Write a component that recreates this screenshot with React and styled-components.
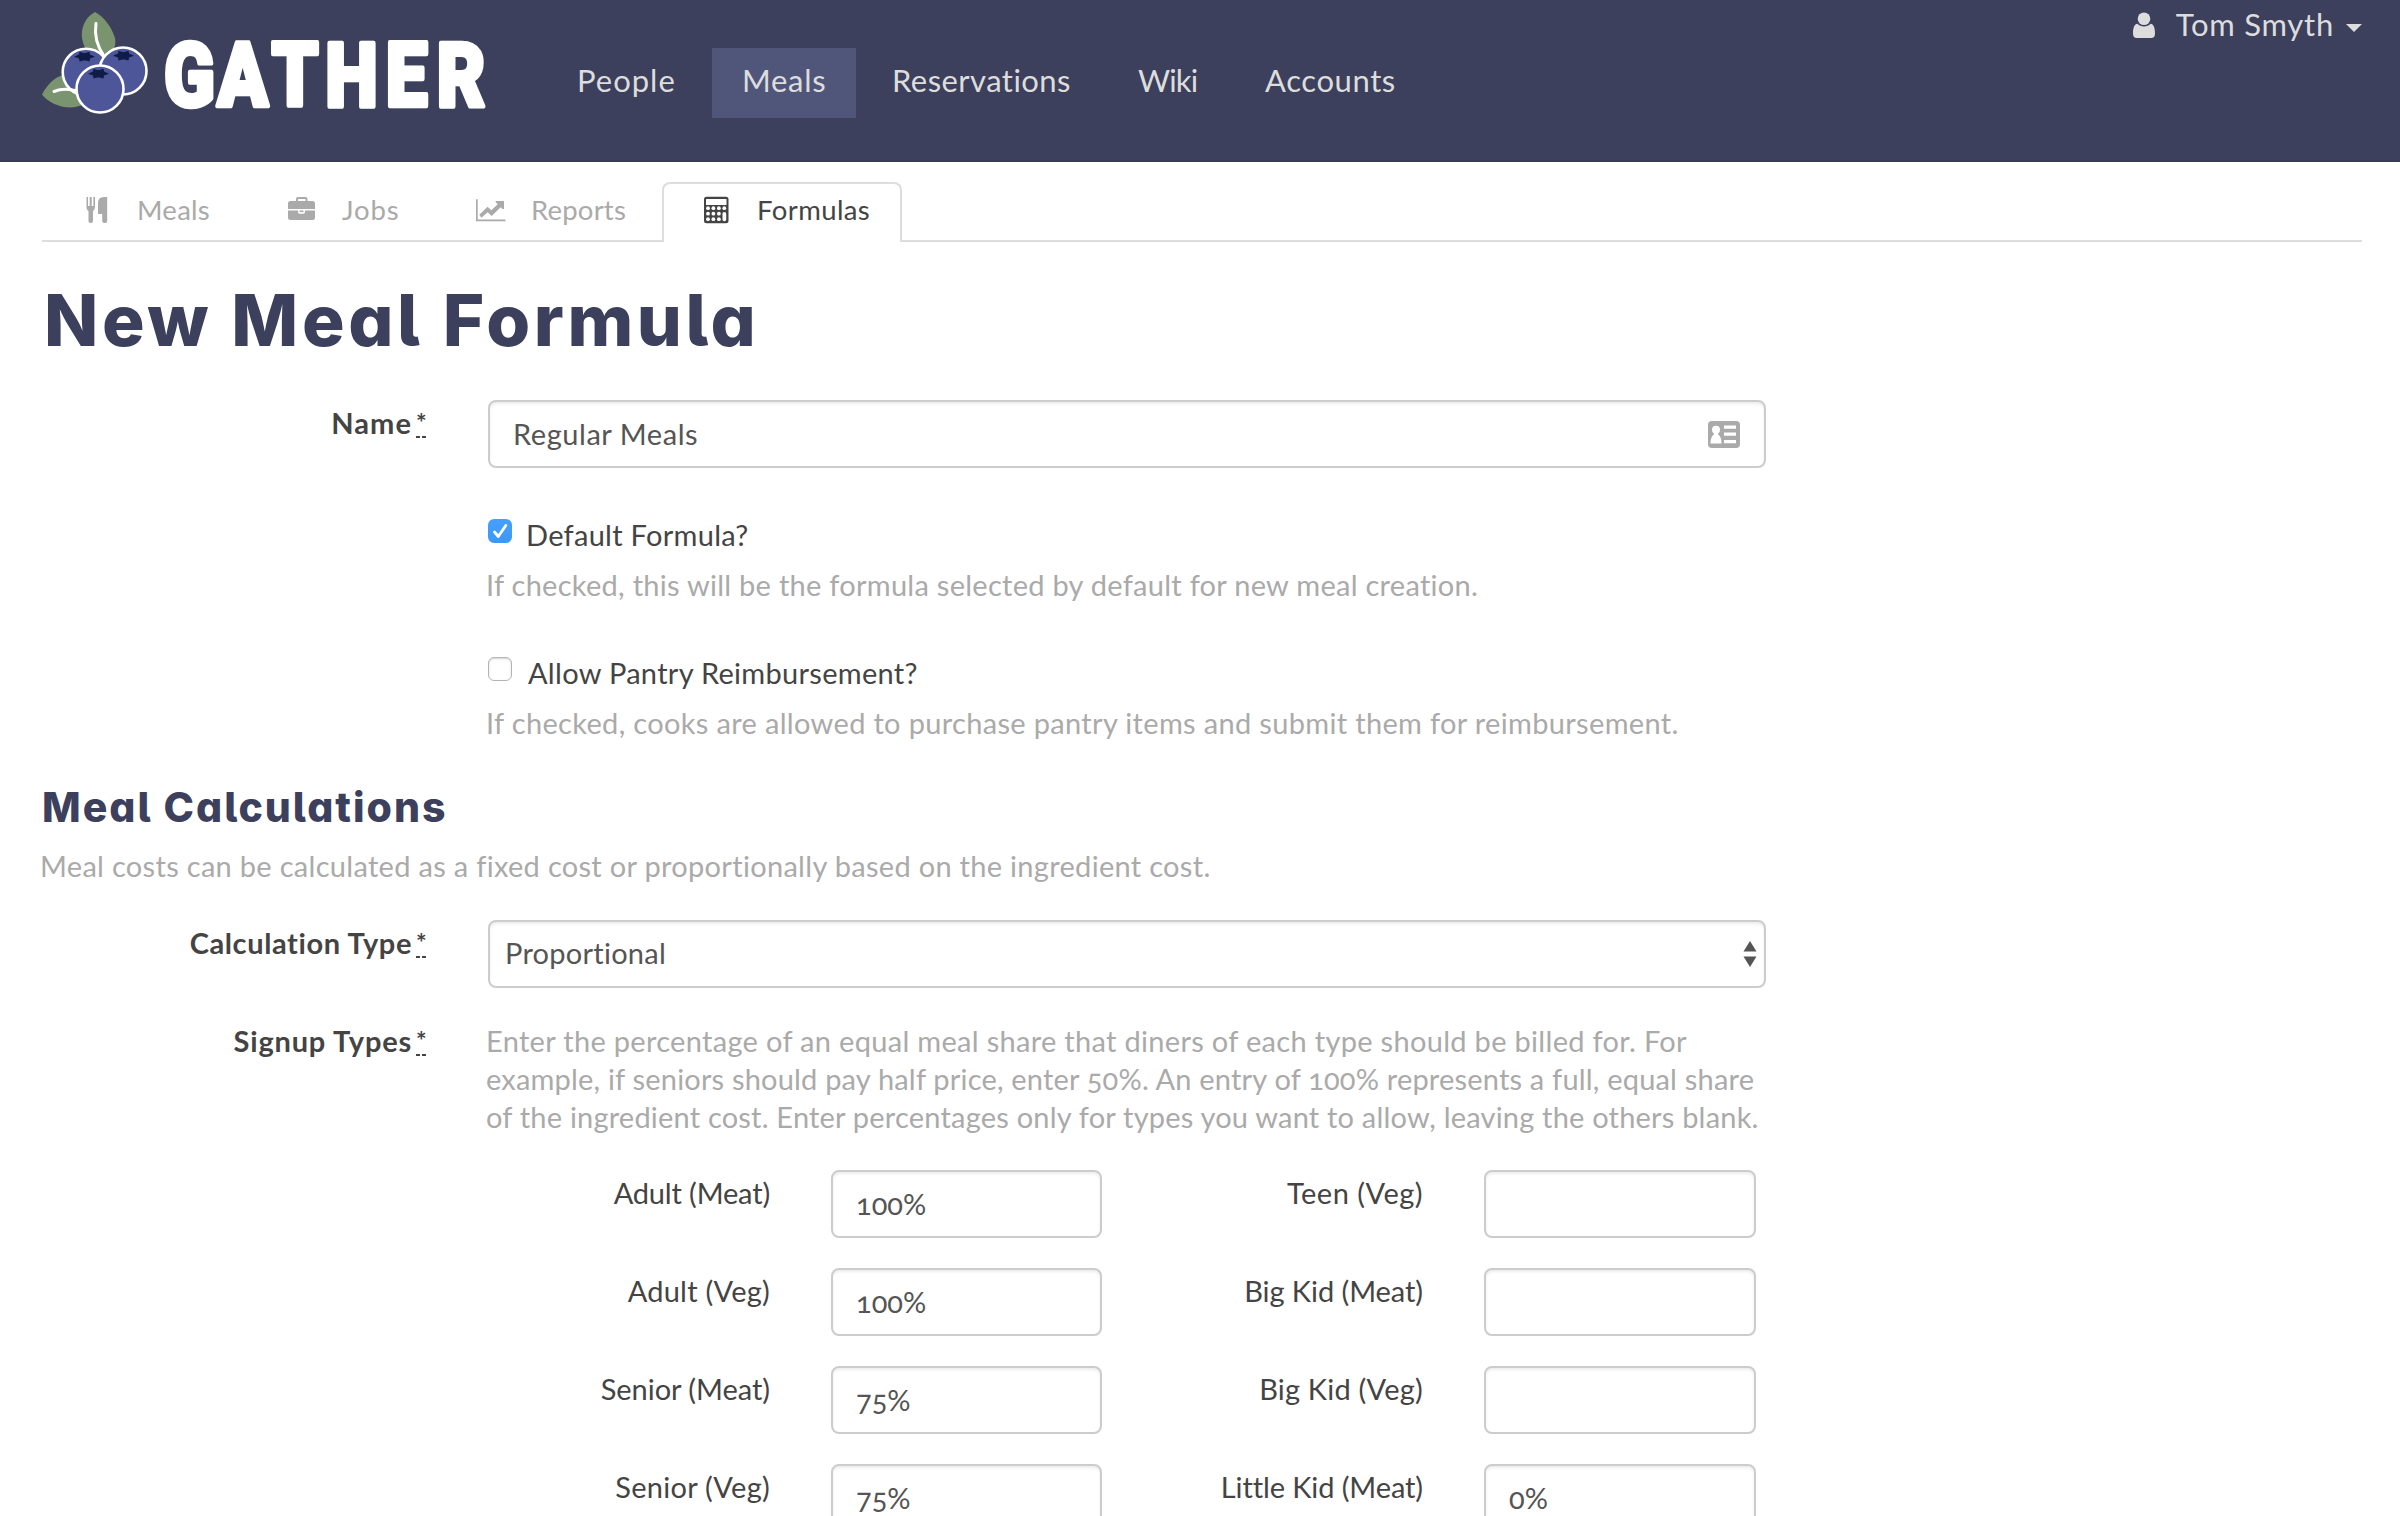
import React from "react";
import styled, { createGlobalStyle } from "styled-components";

const navy = "#3c405c";
const heading = '"Inter", "Open Sans", sans-serif';

const GlobalStyle = createGlobalStyle`
  * { box-sizing: border-box; }
  body {
    margin: 0;
    background: #fff;
    color: #444;
    font-family: "Lato", "Open Sans", sans-serif;
    font-size: 29px;
    line-height: 38px;
    font-feature-settings: "onum";
  }
`;

const Page = styled.div`
  width: 2400px;
  height: 1516px;
  overflow: hidden;
`;

/* ---------- header ---------- */

const Header = styled.header`
  display: flex;
  align-items: flex-start;
  height: 162px;
  padding: 0 38px 0 42px;
  background: ${navy};
  border-bottom: 2px solid #383b57;
`;

const LogoArt = styled.svg`
  flex: none;
  display: block;
  width: 456px;
  height: 150px;
  overflow: visible;
`;

const Wordmark = styled.text`
  font-family: "Roboto", sans-serif;
  font-weight: 900;
  font-size: 89px;
  fill: #fff;
  stroke: #fff;
  stroke-width: 4.4px;
  stroke-linejoin: round;
  text-anchor: middle;
`;

const Nav = styled.nav`
  display: flex;
  gap: 6px;
  margin: 48px 0 0 49px;
`;

const NavItem = styled.a`
  width: ${(p) => p.$width}px;
  height: 70px;
  padding-left: 30px;
  font-size: 31px;
  line-height: 65px;
  letter-spacing: ${(p) => p.$track}px;
  white-space: nowrap;
  color: #ddd;
  background: ${(p) => (p.$active ? "#50567a" : "transparent")};
`;

const UserMenu = styled.div`
  display: flex;
  margin-left: auto;
  font-size: 31px;
  line-height: 48px;
  letter-spacing: 0.75px;
  color: #ddd;
  fill: #ddd;
`;

const UserIcon = styled.svg`
  width: 22px;
  height: 26px;
  margin: 12px 21px 0 0;
`;

const Caret = styled.svg`
  width: 16px;
  height: 8px;
  margin: 24px 0 0 12px;
`;

/* ---------- tabs ---------- */

const Tabs = styled.div`
  display: flex;
  height: 60px;
  margin: 20px 38px 0 42px;
  padding-left: 44px;
  border-bottom: 2px solid #ddd;
`;

const Tab = styled.a`
  flex: none;
  display: flex;
  width: ${(p) => p.$width}px;
  height: 60px;
  padding-left: ${(p) => (p.$active ? 40 : 0)}px;
  border: solid ${(p) => (p.$active ? "#ddd" : "transparent")};
  border-width: ${(p) => (p.$active ? "2px 2px 0" : "2px 0 0")};
  border-radius: 8px 8px 0 0;
  background: ${(p) => (p.$active ? "#fff" : "transparent")};
  color: ${(p) => (p.$active ? "#444" : "#aaa")};
  fill: ${(p) => (p.$active ? "#444" : "#aaa")};
  font-size: 27.5px;
  line-height: 51px;
  letter-spacing: ${(p) => p.$track}px;
`;

const TabIcon = styled.svg`
  flex: none;
  width: ${(p) => p.$slot}px;
  height: 32px;
  margin-top: 11px;
`;

/* ---------- form ---------- */

const Content = styled.main`
  margin-left: 42px;
  width: 1724px;
`;

const PageTitle = styled.h1`
  margin: 39px 0 0;
  padding-left: 2px;
  font: 800 71px/78px ${heading};
  font-feature-settings: "cv11", "cv05";
  letter-spacing: 3.6px;
  white-space: nowrap;
  color: ${navy};
`;

const SectionTitle = styled.h3`
  margin: 42px 0 0;
  font: 800 41px/46px ${heading};
  font-feature-settings: "cv11", "cv05";
  letter-spacing: 1.98px;
  white-space: nowrap;
  color: ${navy};
`;

const Muted = styled.p`
  margin: ${(p) => p.$top || 0}px 0 0 -2px;
  letter-spacing: ${(p) => p.$track}px;
  white-space: nowrap;
  color: #aaa;
`;

const Line = styled.span`
  display: block;
  letter-spacing: ${(p) => p.$track}px;
`;

const FormRow = styled.div`
  display: grid;
  grid-template-columns: 386px 1278px;
  column-gap: 60px;
  margin-top: ${(p) => p.$top}px;
`;

const Label = styled.label`
  display: flex;
  justify-content: flex-end;
  padding: ${(p) => (p.$boxed ? 4 : 0)}px 2px 0 0;
  font-weight: 700;
  letter-spacing: ${(p) => p.$track}px;
`;

const Required = styled.abbr`
  width: 10px;
  height: 38px;
  margin-left: 4px;
  font-size: 25px;
  line-height: 36px;
  letter-spacing: 0;
  text-align: right;
  background: linear-gradient(90deg, #444 4px, transparent 4px) 0 32px / 6px 2px repeat-x;
`;

const Field = styled.div`
  display: flex;
  align-items: center;
  height: 68px;
  border: 2px solid #ccc;
  border-radius: 8px;
  box-shadow: inset 0 2px 3px rgba(0, 0, 0, 0.075);
  padding-right: ${(p) => (p.$picker ? 6 : 24)}px;
  padding-left: ${(p) => (p.$picker ? 15 : 23)}px;
`;

const FieldInput = styled.input`
  flex: 1;
  min-width: 0;
  height: 64px;
  padding: 0 0 2px;
  border: 0;
  outline: 0;
  background: transparent;
  color: #555;
  font: inherit;
  font-feature-settings: inherit;
  letter-spacing: ${(p) => p.$track || 0}px;
`;

const Selected = styled.span`
  flex: 1;
  padding-bottom: 2px;
  letter-spacing: 0.25px;
  color: #555;
`;

const CardIcon = styled.svg`
  width: 32px;
  height: 27px;
`;

const Stepper = styled.svg`
  width: 16px;
  height: 28px;
  fill: #555;
`;

const CheckGroup = styled.div`
  margin: ${(p) => p.$top}px 0 0 446px;
`;

const CheckLabel = styled.label`
  display: flex;
  align-items: flex-start;
  margin-bottom: 12px;
  letter-spacing: ${(p) => p.$track}px;
  white-space: nowrap;
`;

const Box = styled.span`
  flex: none;
  display: flex;
  width: 24px;
  height: 24px;
  margin: 3px ${(p) => (p.$checked ? 14 : 16)}px 0 0;
  border: ${(p) => (p.$checked ? "0" : "1px solid #b4b4b4")};
  border-radius: 6px;
  background: ${(p) => (p.$checked ? "linear-gradient(#45a0fc, #3b99fc)" : "#fff")};
  box-shadow: ${(p) => (p.$checked ? "none" : "inset 0 1px 2px rgba(0,0,0,0.18)")};
`;

const SignupGrid = styled.div`
  display: grid;
  grid-template-columns: 282px 271px 260px 272px;
  gap: 30px 61px;
  margin-top: 34px;
`;

const SignupLabel = styled.label`
  padding-top: 4px;
  text-align: right;
  white-space: nowrap;
  letter-spacing: ${(p) => p.$track}px;
`;

/* ---------- drawings ---------- */

const Star = ({ x, y }) => (
  <path
    transform={`translate(${x} ${y})`}
    d="M-10.5 0L-5.5-2.2L-5-5L-1.2-3.8L1.2-3.8L5-5L5.5-2.2L10.5 0L5.5 1.8L5 4.8L1.2 3.8L-1.2 3.8L-5 4.8L-5.5 1.8Z"
    fill="#101b48"
  />
);

const Logo = () => (
  <LogoArt viewBox="42 0 456 150">
    <g fill="#7b9470">
      <path d="M95 12C84 18 81 29 82 38C83 45 86 50 90 55H110C115 49 116 43 115 38C111 26 104 17 95 12Z" />
      <path d="M42 94.5C49 81 59 74 68 75C74 75.500 79 78 83 83L84 104C79 107 72 108 64 107C55 105 47 101 42 94.500Z" />
    </g>
    <g fill="#4d5699" stroke="#fff" strokeWidth="2.6">
      <circle cx="86" cy="72" r="23.3" />
      <circle cx="123" cy="71" r="23.500" />
    </g>
    <g fill="none" stroke="#fff" strokeWidth="3" strokeLinecap="round">
      <path d="M96 23.500C94 36 97 46 104 56" />
      <path d="M54 91.500C60 89 68 88.500 77 91" />
    </g>
    <Star x={84.5} y={56.7} />
    <Star x={123.5} y={55.7} />
    <circle cx="100" cy="89" r="23.500" fill="#4d5699" stroke="#fff" strokeWidth="2.6" />
    <Star x={98.5} y={73.7} />
    <Wordmark transform="translate(0 106) scale(.84 1)" x="225.600 289 351.200 418.500 484 549" y="0">
      GATHER
    </Wordmark>
  </LogoArt>
);

const Cutlery = () => (
  <TabIcon $slot={51} viewBox="0 0 51 32">
    <path d="M.5 2H2v9h1.700V2h2v9h1.700V2H9v10c0 2-1 3-2 4v10q0 2-2 2H4.500q-2 0-2-2V16C1.200 15 .5 14 .5 12ZM21.200 2V26q0 2-2 2h-1q-2 0-2-2v-7H12V8q0-6 6-6Z" />
  </TabIcon>
);

const Briefcase = () => (
  <TabIcon $slot={54} viewBox="0 0 54 32">
    <path
      fillRule="evenodd"
      d="M8 6V4q0-2 2-2h7.500q2 0 2 2v2H24.500q2.500 0 2.500 2.500V14H0V8.500Q0 6 2.500 6ZM10 6h7.500V4H10ZM0 15.500H10V17q0 1.700 1.500 1.700h4q1.500 0 1.500-1.700v-1.500H27V22.500q0 2.500-2.500 2.500h-22Q0 25 0 22.500Z"
    />
    <path d="M11.500 15.500h4v1.600h-4z" />
  </TabIcon>
);

const Chart = () => (
  <TabIcon $slot={56} viewBox="0 0 56 32">
    <path d="M1 4.300h1.700v20.200H30.500v1.700H1ZM6.300 22.700L4.300 19.700L12.600 11.800L16.300 15.200L22.700 9.200L20.700 7.200V6H29V14L27.500 14L25.700 12.200L16.700 21L12.700 17.200Z" />
  </TabIcon>
);

const Calculator = () => (
  <TabIcon $slot={53} viewBox="0 0 53 32">
    <rect x="0" y="1.800" width="24.500" height="26.500" rx="2.500" />
    <rect x="2" y="4" width="20.500" height="6" rx=".6" fill="#fff" />
    <g fill="#fff">
      {[4, 9.4, 14.9, 20.3].map((x) => [13.2, 18.7, 24.2].map((y) =>
        x > 20 && y > 14 ? null : <circle key={`${x}-${y}`} cx={x} cy={y} r="1.9" />
      ))}
      <rect x="18.500" y="17" width="3.700" height="9.200" rx="1.800" />
    </g>
  </TabIcon>
);

const Check = () => (
  <svg width="24" height="24" viewBox="0 0 24 24">
    <path d="M6.500 13L10.300 17.500L17.800 6.500" fill="none" stroke="#fff" strokeWidth="2.800" strokeLinecap="round" strokeLinejoin="round" />
  </svg>
);

/* ---------- data ---------- */

const navItems = [
  { text: "People", width: 159, track: 1 },
  { text: "Meals", width: 144, track: 0.7, active: true },
  { text: "Reservations", width: 240, track: 0.45 },
  { text: "Wiki", width: 121, track: -0.8 },
  { text: "Accounts", width: 190, track: 0.6 },
];

const tabs = [
  { text: "Meals", width: 202, track: 0.25, Icon: Cutlery },
  { text: "Jobs", width: 187, track: 0.85, Icon: Briefcase },
  { text: "Reports", width: 187, track: 0.2, Icon: Chart },
  { text: "Formulas", width: 240, track: 0.4, Icon: Calculator, active: true },
];

const signups = [
  ["Adult (Meat)", -0.16, "100%"],
  ["Teen (Veg)", 0.46, ""],
  ["Adult (Veg)", 0.21, "100%"],
  ["Big Kid (Meat)", -0.06, ""],
  ["Senior (Meat)", -0.04, "75%"],
  ["Big Kid (Veg)", 0.2, ""],
  ["Senior (Veg)", 0.27, "75%"],
  ["Little Kid (Meat)", -0.1, "0%"],
];

export default function App() {
  return (
    <Page>
      <GlobalStyle />
      <Header>
        <Logo />
        <Nav>
          {navItems.map((n) => (
            <NavItem key={n.text} $width={n.width} $track={n.track} $active={n.active}>{n.text}</NavItem>
          ))}
        </Nav>
        <UserMenu>
          <UserIcon viewBox="0 0 22 26">
            <circle cx="11" cy="6.800" r="6.300" />
            <path d="M4.500 11.800C6 13.500 8.500 14.500 11 14.500S16 13.500 17.500 11.800C20.500 12 22 15.500 22 21.500Q22 26 18 26H4Q0 26 0 21.500C0 15.500 1.500 12 4.500 11.800Z" />
          </UserIcon>
          Tom Smyth
          <Caret viewBox="0 0 16 8"><path d="M0 0H16L8 8Z" /></Caret>
        </UserMenu>
      </Header>

      <Tabs>
        {tabs.map(({ text, width, track, Icon, active }) => (
          <Tab key={text} $width={width} $track={track} $active={active}>
            <Icon />
            {text}
          </Tab>
        ))}
      </Tabs>

      <Content>
        <PageTitle>New Meal Formula</PageTitle>

        <FormRow $top={41}>
          <Label $boxed $track={1.1}>Name<Required>*</Required></Label>
          <Field>
            <FieldInput defaultValue="Regular Meals" $track={0.55} />
            <CardIcon viewBox="0 0 32 27">
              <rect width="32" height="27" rx="4" fill="#aaa" />
              <g fill="#fff">
                <circle cx="8" cy="8.700" r="4" />
                <path d="M5.800 11h4.400v2.500C12.500 15 13.500 18 13.500 22.500H2.500C2.500 18 3.500 15 5.800 13.500Z" />
                <path d="M16 4.500h12v3.300H16zM16 11.500h12v3.300H16zM16 19h12v3.300H16z" />
              </g>
            </CardIcon>
          </Field>
        </FormRow>

        <CheckGroup $top={48}>
          <CheckLabel $track={0.28}><Box $checked><Check /></Box>Default Formula?</CheckLabel>
          <Muted $track={0.27}>If checked, this will be the formula selected by default for new meal creation.</Muted>
        </CheckGroup>
        <CheckGroup $top={50}>
          <CheckLabel $track={0.3}><Box />Allow Pantry Reimbursement?</CheckLabel>
          <Muted $track={0.33}>If checked, cooks are allowed to purchase pantry items and submit them for reimbursement.</Muted>
        </CheckGroup>

        <SectionTitle>Meal Calculations</SectionTitle>
        <Muted $top={17} $track={0.3}>
          Meal costs can be calculated as a fixed cost or proportionally based on the ingredient cost.
        </Muted>

        <FormRow $top={35}>
          <Label $boxed $track={0.6}>Calculation Type<Required>*</Required></Label>
          <Field $picker>
            <Selected>Proportional</Selected>
            <Stepper viewBox="0 0 16 28"><path d="M1.500 11.500H14.500L8 1ZM1.500 16.500H14.500L8 27Z" /></Stepper>
          </Field>
        </FormRow>

        <FormRow $top={34}>
          <Label $track={0.8}>Signup Types<Required>*</Required></Label>
          <div>
            <Muted>
              <Line $track={0.31}>Enter the percentage of an equal meal share that diners of each type should be billed for. For</Line>
              <Line $track={0.19}>example, if seniors should pay half price, enter 50%. An entry of 100% represents a full, equal share</Line>
              <Line $track={0.2}>of the ingredient cost. Enter percentages only for types you want to allow, leaving the others blank.</Line>
            </Muted>
            <SignupGrid>
              {signups.map(([text, track, value]) => (
                <React.Fragment key={text}>
                  <SignupLabel $track={track}>{text}</SignupLabel>
                  <Field><FieldInput defaultValue={value} /></Field>
                </React.Fragment>
              ))}
            </SignupGrid>
          </div>
        </FormRow>
      </Content>
    </Page>
  );
}
